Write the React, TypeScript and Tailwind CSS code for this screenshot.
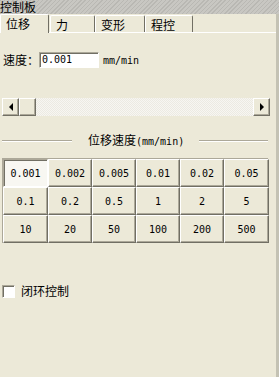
const cjk = "font-['SimSun','Noto_Sans_CJK_SC',sans-serif]";
const mono = "font-['DejaVu_Sans_Mono',monospace]";

const speeds = [
  ['0.001', '0.002', '0.005', '0.01', '0.02', '0.05'],
  ['0.1', '0.2', '0.5', '1', '2', '5'],
  ['10', '20', '50', '100', '200', '500'],
];

const raised =
  'border border-t-white border-l-white border-b-[#716f64] border-r-[#716f64] shadow-[inset_-1px_-1px_0_#aca899]';
const sunken =
  'border border-t-[#aca899] border-l-[#aca899] border-b-white border-r-white shadow-[inset_1px_1px_0_#716f64]';

function Tab({ label, width, active }: { label: string; width: string; active?: boolean }) {
  return (
    <div
      className={`${width} ${
        active ? 'h-[19px] -mb-px z-10 bg-[#ece9d8]' : 'h-[17px]'
      } flex items-start border-l border-t border-r border-l-white border-t-white border-r-[#716f64] rounded-t-[2px] pl-[5px] pt-[2px] text-[12px] leading-[13px] text-black`}>
      {label}
    </div>
  );
}

function Etched({ className = '' }: { className?: string }) {
  return <div className={`h-[2px] border-t border-t-[#aca899] border-b border-b-white ${className}`} />;
}

export default function App() {
  return (
    <div className={`w-[279px] h-[377px] bg-[#ece9d8] flex flex-col overflow-hidden ${cjk}`}>
      <div className="h-[14px] shrink-0 bg-[repeating-linear-gradient(135deg,#b9b8b3_0px,#b9b8b3_1px,#c8c7c2_1px,#c8c7c2_3px)] text-[12px] leading-[14px] text-black whitespace-nowrap">
        控制板
      </div>

      <div className="flex-1 flex border-r-[3px] border-r-[#c4c2b4]">
        <div className="flex-1 flex flex-col">
          <div className="h-[19px] flex items-end border-b border-b-white">
            <Tab label="位移" width="w-[49px]" active />
            <Tab label="力" width="w-[45px] ml-px" />
            <Tab label="变形" width="w-[50px]" />
            <Tab label="程控" width="w-[48px]" />
          </div>

          <div className="mt-[19px] flex items-center h-[16px] pl-[3px]">
            <span className="shrink-0 whitespace-nowrap text-[12px] leading-[14px]">速度：</span>
            <div className={`w-[60px] h-[16px] shrink-0 bg-white ${sunken} pl-[2px] text-[10px] leading-[13px] ${mono}`}>
              0.001
            </div>
            <span className={`ml-[4px] text-[10px] ${mono}`}>mm/min</span>
          </div>

          <div className="mt-[30px] ml-[2px] w-[268px] h-[18px] flex bg-[#f4f3ee]">
            <div className={`w-[17px] h-[18px] bg-[#ece9d8] ${raised} flex items-center justify-center`}>
              <div className="w-0 h-0 border-y-[4px] border-y-transparent border-r-[4px] border-r-black" />
            </div>
            <div className={`w-[17px] h-[18px] bg-[#ece9d8] ${raised}`} />
            <div className="flex-1 bg-[repeating-conic-gradient(#f7f6f2_0%_25%,#eceae2_0%_50%)] bg-[length:2px_2px]" />
            <div className={`w-[17px] h-[18px] bg-[#ece9d8] ${raised} flex items-center justify-center`}>
              <div className="w-0 h-0 border-y-[4px] border-y-transparent border-l-[4px] border-l-black" />
            </div>
          </div>

          <div className="mt-[18px] h-[14px] flex items-center pl-[2px] pr-[8px]">
            <Etched className="w-[70px]" />
            <span className="ml-[16px] text-[12px] leading-[14px] whitespace-nowrap">
              位移速度<span className={`text-[10px] ${mono}`}>(mm/min)</span>
            </span>
            <Etched className="flex-1 ml-[15px]" />
          </div>

          <div className="mt-[10px] ml-[2px] w-[266px] grid grid-cols-[45px_44px_44px_44px_44px_45px] grid-rows-[28px_28px_28px] border-t border-l border-t-[#aca899] border-l-[#aca899]">
            {speeds.flat().map((v, i) => (
              <button
                key={v}
                type="button"
                className={`${
                  i === 0 ? `bg-[#f8f7f2] ${sunken}` : `bg-[#ece9d8] ${raised}`
                } flex items-center justify-center text-[10px] text-black ${mono}`}>
                {v}
              </button>
            ))}
          </div>

          <label className="mt-[41px] ml-[2px] h-[14px] flex items-center gap-[6px]">
            <span className={`w-[13px] h-[13px] bg-white ${sunken}`} />
            <span className="text-[12px] leading-[14px]">闭环控制</span>
          </label>
        </div>
      </div>
    </div>
  );
}
